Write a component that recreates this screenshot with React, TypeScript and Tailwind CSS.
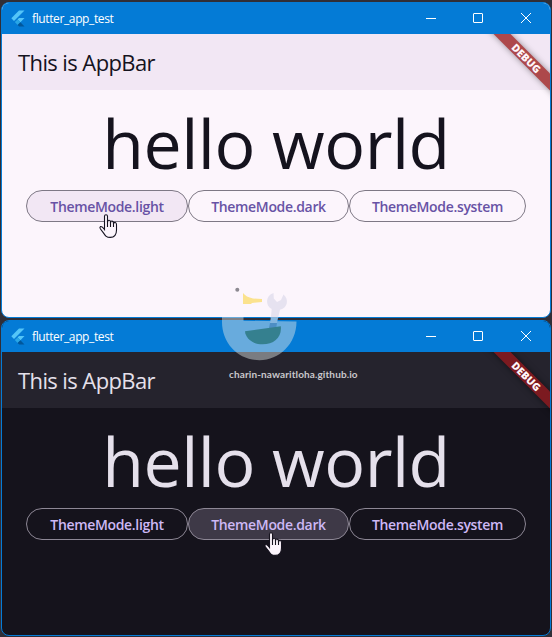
import React from "react";

type Mode = "light" | "dark";

const FlutterLogo = () => (
  <svg width="14" height="17" viewBox="0 0 14 17" className="shrink-0">
    <path d="M8 0.5H13.5L3 11L0.3 8.2Z" fill="#54c5f8" />
    <path d="M8 8H13.5L9.4 12.2L6.6 9.4Z" fill="#54c5f8" />
    <path d="M3.8 12.1L6.6 9.4L9.4 12.2L6.6 14.9Z" fill="#29a6e6" />
    <path d="M6.6 14.9L9.4 12.2L13.5 16.5H8.2Z" fill="#01579b" />
  </svg>
);

const WindowControls = () => (
  <svg width="108" height="12" viewBox="0 0 108 12" fill="none" stroke="#fff" className="relative -top-px mr-[18px] shrink-0">
    <path d="M2 6.5H12" />
    <rect x="49.5" y="1.5" width="9" height="9" rx="0.5" />
    <path d="M97 1L107 11M107 1L97 11" />
  </svg>
);

const HandCursor = ({ mode }: { mode: Mode }) => (
  <svg
    width="20"
    height="26"
    viewBox="0 0 20 26"
    className={
      mode === "light"
        ? "absolute left-[96px] top-[210px]"
        : "absolute left-[261px] top-[210px]"
    }
  >
    <path
      d="M6.5 16.5V3.2Q6.5 1.7 8 1.7Q9.5 1.7 9.5 3.2V9.5Q9.7 7 11.2 7.3Q12.5 7.5 12.5 9V10Q12.7 7.7 14.2 8.1Q15.5 8.4 15.5 10V11Q16 9 17.3 9.4Q18.5 9.8 18.5 11.4V17C18.5 21.5 16.5 24.4 12.2 24.4C8.5 24.4 7.5 23 5.6 20.1L2.3 15.8Q1.4 14.2 2.6 13.5Q4 13 6.5 16.5Z"
      fill="#fcf5fc"
      stroke={mode === "light" ? "#151320" : "#16131e"}
      strokeWidth="1.1"
    />
    <path d="M9.5 8V14M12.5 9V14M15.5 10V14" stroke="#16131e" strokeWidth="1.1" />
  </svg>
);

const DebugBanner = ({ mode }: { mode: Mode }) => (
  <div
    className={`absolute left-[465px] top-[49.5px] flex h-[12px] w-[120px] rotate-45 items-center justify-center ${
      mode === "light" ? "bg-[#ad484b] shadow-[0_0_6px_rgba(0,0,0,0.4)]" : "bg-[#7c1a20] shadow-[0_0_6px_rgba(0,0,0,0.5)]"
    }`}
  >
    <span className="relative -left-[1px] text-[10.5px] font-black leading-[12px] text-[#fff5f8]">DEBUG</span>
  </div>
);

const buttons = [
  { label: "ThemeMode.light", mode: "light", width: "w-[162px]" },
  { label: "ThemeMode.dark", mode: "dark", width: "w-[161px]" },
  { label: "ThemeMode.system", mode: "system", width: "w-[177px]" },
];

const AppWindow = ({ mode }: { mode: Mode }) => {
  const light = mode === "light";
  return (
    <section
      className={`relative h-[316px] w-[550px] overflow-hidden rounded-[8px] border border-[#047bd6] ${
        light ? "bg-[#fcf5fc] text-[#15131e]" : "bg-[#15131c] text-[#e5e0eb]"
      }`}
    >
      <header className="relative z-10 flex h-[31px] items-center justify-between bg-[#047bd6] text-white">
        <div className="flex items-center gap-[7px] pl-[9px]">
          <FlutterLogo />
          <span className="relative top-[0.5px] text-[12px] leading-[16px] tracking-[-0.38px]">flutter_app_test</span>
        </div>
        <WindowControls />
      </header>
      <div className={`flex h-[56px] items-center px-4 ${light ? "bg-[#f2e7f4]" : "bg-[#25232d]"}`}>
        <h1 className="text-[22px] leading-[28px] tracking-[-0.6px]">This is AppBar</h1>
      </div>
      <DebugBanner mode={mode} />
      <main className="flex flex-col items-center">
        <p className="mt-[6px] h-[94px] whitespace-nowrap text-[68px] leading-[93px] tracking-[-0.5px]">hello world</p>
        <div className="flex">
          {buttons.map((b) => (
            <button
              key={b.mode}
              className={`h-[32px] rounded-full border pt-[2px] text-[14px] font-semibold leading-[28px] tracking-[-0.33px] ${b.width} ${
                light ? "border-[#7e7885] text-[#6852a5]" : "border-[#8d8795] text-[#cdb8f5]"
              } ${b.mode === mode ? (light ? "bg-[#f2e7f4]" : "bg-[#3e3947]") : ""}`}
            >
              {b.label}
            </button>
          ))}
        </div>
      </main>
      <HandCursor mode={mode} />
    </section>
  );
};

const Watermark = () => (
  <div className="absolute left-[210px] top-[280px] z-20 h-[105px] w-[160px]">
    <svg width="160" height="105" viewBox="0 0 160 105">
      <circle cx="27.3" cy="9.8" r="2" fill="#8c8991" />
      <path d="M33 13Q36 17 43 18.5L52 19V22L42 23L41 24H33Z" fill="#fbe28e" />
      <path
        d="M12 37H33.5V40.7L86.5 41.5C86.5 64 69 80.2 49.5 80.2C28 80.2 12 63 12 42Z"
        fill="#dfe4e4"
        fillOpacity="0.46"
      />
      <path
        d="M63.5 13C55.5 15.5 55 25.5 61.7 29L60.8 38H68L70 29.8C78 28 79 19 73.5 14.5L71 20L67 22L63.8 18.5Z"
        fill="#e6e2f0"
      />
      <path d="M60.9 37H68.2L67 43H60Z" fill="#84b6df" />
      <path d="M60 43H67L66.2 48H59Z" fill="#4d8ec4" />
      <path d="M35 51.3L70.8 46.3C72 57 64 64.3 52.5 64.3C42 64.3 35.5 58 35 51.3Z" fill="#35808f" />
    </svg>
    <span className="absolute left-[19px] top-[87px] whitespace-nowrap font-['Lato'] text-[10px] font-bold leading-[14px] tracking-[0.12px] text-[#c9c7cb]">
      charin-nawaritloha.github.io
    </span>
  </div>
);

export default function App() {
  return (
    <div className="relative flex h-[637px] w-[552px] flex-col gap-[2px] overflow-hidden bg-[#302e37] pl-px pt-[2px] font-['Open_Sans','Noto_Sans',sans-serif]">
      <AppWindow mode="light" />
      <AppWindow mode="dark" />
      <Watermark />
    </div>
  );
}
